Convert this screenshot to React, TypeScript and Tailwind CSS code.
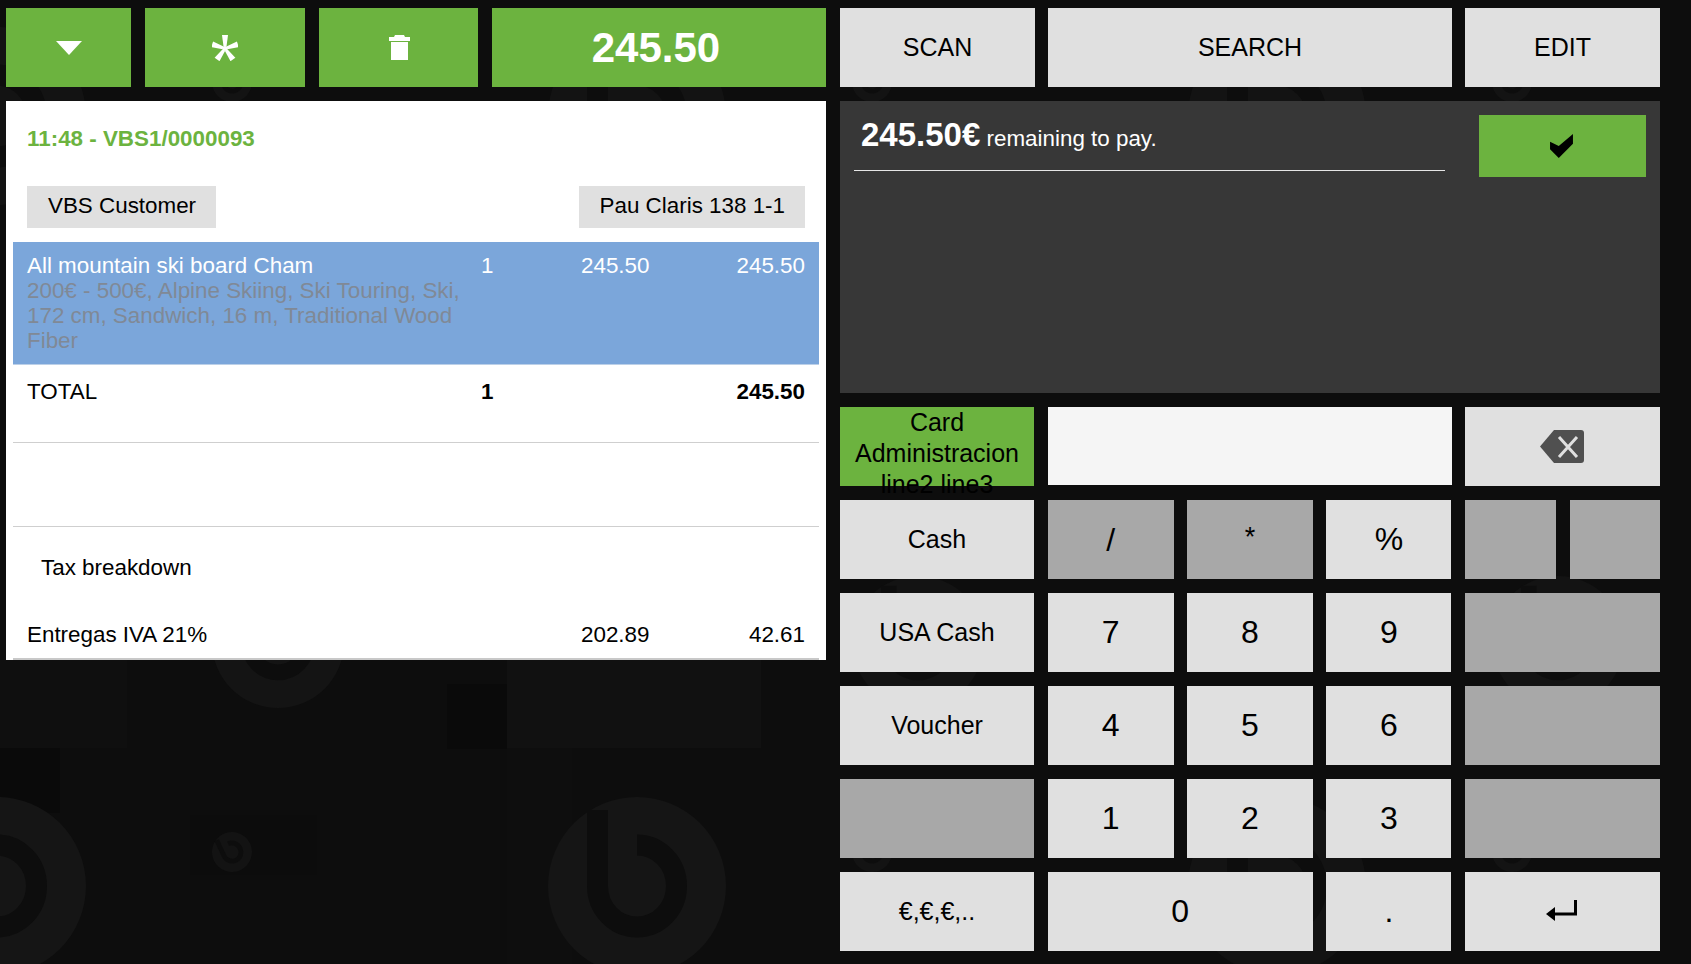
import type { ReactNode } from "react";

const FONT = "font-['Liberation_Sans',Arial,sans-serif]";

// the wallpaper is a 640x770 tile: one big, one medium, one small "b" mark
const MARKS = [
    { x: -3, y: 116, r: 89, a: 0, c: "#131313" },
    { x: 637, y: 116, r: 89, a: 0, c: "#131313" },
    { x: 1277, y: 116, r: 89, a: 0, c: "#131313" },
    { x: -3, y: 886, r: 89, a: 0, c: "#151515" },
    { x: 637, y: 886, r: 89, a: 0, c: "#151515" },
    { x: 1277, y: 886, r: 89, a: 0, c: "#131313" },
    { x: 278, y: 642, r: 66, a: 0, c: "#141414" },
    { x: 918, y: 642, r: 66, a: 0, c: "#131313" },
    { x: 1558, y: 642, r: 66, a: 0, c: "#131313" },
    { x: 232, y: 82, r: 20, a: -25, c: "#131313" },
    { x: 872, y: 82, r: 20, a: -25, c: "#131313" },
    { x: 1512, y: 82, r: 20, a: -25, c: "#131313" },
    { x: 232, y: 852, r: 20, a: -25, c: "#131313" },
    { x: 872, y: 852, r: 20, a: -25, c: "#131313" },
    { x: 1512, y: 852, r: 20, a: -25, c: "#131313" },
];

const Wallpaper = () => (
    <svg className="absolute inset-0" width="1691" height="964" viewBox="0 0 1691 964">
        <rect width="1691" height="964" fill="#0d0d0d" />
        <rect x="0" y="640" width="127" height="108" fill="#0f0f0f" />
        <rect x="0" y="748" width="60" height="65" fill="#0a0a0a" />
        <rect x="447" y="684" width="60" height="65" fill="#0a0a0a" />
        <rect x="507" y="640" width="254" height="108" fill="#111111" />
        <rect x="507" y="748" width="65" height="216" fill="#0e0e0e" />
        <rect x="190" y="815" width="127" height="60" fill="#0c0c0c" />
        {MARKS.map((m) => (
            <g key={`${m.x}-${m.y}`} transform={`translate(${m.x} ${m.y}) rotate(${m.a}) scale(${m.r / 89})`}>
                <circle r="89" fill={m.c} />
                <path d="M-39.5 -76 V0 A39.5 41 0 1 0 0 -41" fill="none" stroke="#0d0d0d" strokeWidth="21" />
            </g>
        ))}
    </svg>
);

const Btn = ({ className, children }: { className: string; children?: ReactNode }) => (
    <div className={`flex items-center justify-center overflow-hidden ${className}`}>{children}</div>
);

const Key = ({ children, className = "" }: { children?: ReactNode; className?: string }) => (
    <Btn className={`h-[79px] pb-[2px] bg-[#e0e0e0] text-black text-[32px] ${className}`}>{children}</Btn>
);

const TextKey = ({ children }: { children: ReactNode }) => (
    <Btn className="h-[79px] bg-[#e0e0e0] text-black text-[25px]">{children}</Btn>
);

const Blank = ({ className = "" }: { className?: string }) => (
    <div className={`h-[79px] bg-[#a8a8a8] ${className}`} />
);

const Receipt = () => (
    <div className="flex flex-col h-[559px] bg-white text-[22.4px] leading-[25px] text-black">
        <div className="pt-[25px] pl-[21px] h-[85px] font-bold text-[#6cb33f]">11:48 - VBS1/0000093</div>
        <div className="flex justify-between px-[21px]">
            <div className="flex items-center pl-[21px] pr-[20px] pb-[4px] h-[42px] bg-[#e0e0e0]">VBS Customer</div>
            <div className="flex items-center pl-[21px] pr-[20px] pb-[4px] h-[42px] bg-[#e0e0e0]">Pau Claris 138 1-1</div>
        </div>
        <div className="mx-[7px] mt-[14px] grid grid-cols-[454px_100px_1fr] pt-[11px] pl-[14px] pr-[14px] h-[123px] bg-[#7ba6da] border-b border-[#bcd0e8] text-white">
            <div>
                All mountain ski board Cham
                <div className="text-[#808996]">
                    200€ - 500€, Alpine Skiing, Ski Touring, Ski, 172 cm, Sandwich, 16 m, Traditional Wood Fiber
                </div>
            </div>
            <div>1</div>
            <div className="flex justify-between">
                <span>245.50</span>
                <span>245.50</span>
            </div>
        </div>
        <div className="mx-[7px] grid grid-cols-[454px_100px_1fr] pt-[14px] pl-[14px] pr-[14px] h-[78px] border-b border-[#cfcfcf]">
            <div>TOTAL</div>
            <div className="font-bold">1</div>
            <div className="font-bold text-right">245.50</div>
        </div>
        <div className="mx-[7px] h-[84px] border-b border-[#cfcfcf]" />
        <div className="pt-[28px] pl-[35px] h-[94px]">Tax breakdown</div>
        <div className="mx-[7px] grid grid-cols-[454px_100px_1fr] pt-[1px] pl-[14px] pr-[14px] h-[39px] border-b-2 border-[#c8c8c8]">
            <div>Entregas IVA 21%</div>
            <div />
            <div className="flex justify-between">
                <span>202.89</span>
                <span>42.61</span>
            </div>
        </div>
    </div>
);

const App = () => (
    <div className={`relative w-[1691px] h-[964px] overflow-hidden ${FONT}`}>
        <Wallpaper />
        <div className="relative flex gap-[14px] pl-[6px] pt-[8px]">
            {/* ticket side */}
            <div className="flex flex-col gap-[14px] w-[820px]">
                <div className="flex gap-[14px] h-[79px] text-white">
                    <Btn className="w-[125px] bg-[#6cb33f]">
                        <svg width="26" height="14" viewBox="0 0 26 14">
                            <path d="M0 0 H26 L13 14 Z" fill="#fff" />
                        </svg>
                    </Btn>
                    <Btn className="w-[160px] bg-[#6cb33f]">
                        <svg width="26" height="26" viewBox="0 0 26 26" fill="#fff">
                            {[0, 72, 144, 216, 288].map((a) => (
                                <path key={a} d="M11.5 11.5 L10 0 H16 L14.5 11.5 Z" transform={`rotate(${a} 13 13.5)`} />
                            ))}
                            <circle cx="13" cy="13.5" r="2.5" />
                        </svg>
                    </Btn>
                    <Btn className="w-[159px] pl-[1px] bg-[#6cb33f]">
                        <svg width="21" height="25" viewBox="0 0 21 25" fill="#fff">
                            <path d="M6 0 H15 L16 2 H21 V6 H0 V2 H5 Z M2 7 H19 V25 H2 Z" />
                        </svg>
                    </Btn>
                    <Btn className="flex-1 pr-[6px] bg-[#6cb33f] text-[42px] font-bold">245.50</Btn>
                </div>
                <Receipt />
            </div>

            {/* payment side */}
            <div className="flex flex-col gap-[14px] w-[820px]">
                <div className="grid grid-cols-[195px_404px_195px] gap-x-[13px]">
                    <TextKey>SCAN</TextKey>
                    <TextKey>SEARCH</TextKey>
                    <TextKey>EDIT</TextKey>
                </div>
                <div className="flex h-[292px] bg-[#373737] text-white">
                    <div className="ml-[14px] w-[591px] h-[70px] border-b border-[#e6e6e6] pl-[7px] pt-[15px] leading-[38px] text-[22.4px]">
                        <span className="font-bold text-[33px]">245.50€</span> remaining to pay.
                    </div>
                    <Btn className="ml-[34px] mt-[14px] w-[167px] h-[62px] pr-[2px] bg-[#6cb33f]">
                        <svg width="23" height="24" viewBox="0 0 21 22">
                            <path d="M0 7 L8 11 L21 0 V9 L8 22 L0 14 Z" fill="#000" />
                        </svg>
                    </Btn>
                </div>
                <div className="grid grid-cols-[194px_126px_125.6px_125px_91px_90.4px] gap-x-[13.6px] gap-y-[14px]">
                    <div className="h-[79px] bg-[#6cb33f] text-center leading-[31px] text-[25px] text-black">
                        Card Administracion line2 line3
                    </div>
                    <div className="col-span-3 -mr-px h-[78px] bg-[#f5f5f5]" />
                    <Key className="col-span-2 !pb-0">
                        <svg width="44" height="33" viewBox="0 0 44 33">
                            <path d="M14 0 H41 Q44 0 44 3 V30 Q44 33 41 33 H14 L0 16.5 Z" fill="#505050" />
                            <path d="M19 7 L37 27 M37 7 L19 27" stroke="#e0e0e0" strokeWidth="3" fill="none" />
                        </svg>
                    </Key>

                    <TextKey>Cash</TextKey>
                    <Btn className="h-[79px] bg-[#a8a8a8] text-[32px] text-black">/</Btn>
                    <Btn className="h-[79px] bg-[#a8a8a8] text-[27px] text-black pb-[5px]">*</Btn>
                    <Key>%</Key>
                    <Blank />
                    <Blank />

                    <TextKey>USA Cash</TextKey>
                    <Key>7</Key>
                    <Key>8</Key>
                    <Key>9</Key>
                    <Blank className="col-span-2" />

                    <TextKey>Voucher</TextKey>
                    <Key>4</Key>
                    <Key>5</Key>
                    <Key>6</Key>
                    <Blank className="col-span-2" />

                    <Blank />
                    <Key>1</Key>
                    <Key>2</Key>
                    <Key>3</Key>
                    <Blank className="col-span-2" />

                    <TextKey>€,€,€,..</TextKey>
                    <Key className="col-span-2">0</Key>
                    <Key>.</Key>
                    <Key className="col-span-2 !pb-0 pr-[2px]">
                        <svg width="31" height="23" viewBox="0 0 31 23">
                            <path d="M29.5 0 V14 H6" stroke="#000" strokeWidth="3" fill="none" />
                            <path d="M0 14 L9 7 V21 Z" fill="#000" />
                        </svg>
                    </Key>
                </div>
            </div>
        </div>
    </div>
);

export default App;
